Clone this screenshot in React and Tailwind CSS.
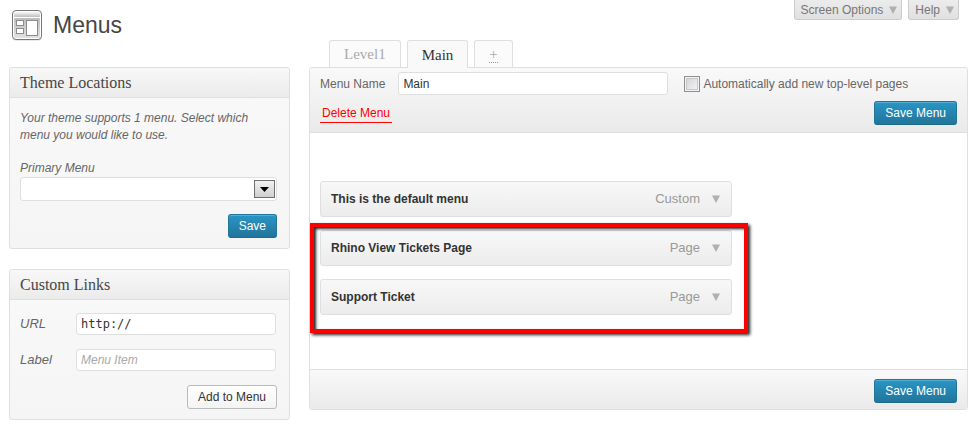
import React, { useState } from 'react';
import clsx from 'clsx';

const menuItems = [
  { id: 2, title: 'Rhino View Tickets Page', type: 'Page' },
  { id: 3, title: 'Support Ticket', type: 'Page' }
];

function MenusIcon() {
  return (
    <svg width="32" height="32" viewBox="0 0 32 32" aria-hidden="true">
      <defs>
        <linearGradient id="barFill" x1="0" y1="0" x2="0" y2="1">
          <stop offset="0" stopColor="#fafafa" />
          <stop offset="1" stopColor="#bdbdbd" />
        </linearGradient>
        <linearGradient id="bodyFill" x1="0" y1="0" x2="0" y2="1">
          <stop offset="0" stopColor="#bcbcbc" />
          <stop offset="1" stopColor="#e2e2e2" />
        </linearGradient>
      </defs>
      <rect x="1.5" y="2.5" width="29" height="29" rx="3.5" fill="#d5d5d5" />
      <rect x="1.5" y="1.5" width="29" height="29" rx="3.5" fill="#fff" stroke="#777" />
      <rect x="3" y="3" width="26" height="5" rx="1" fill="url(#barFill)" />
      <rect x="3" y="9" width="26" height="20" rx="1" fill="url(#bodyFill)" />
      <rect x="5.5" y="11.5" width="7" height="5" fill="#fff" stroke="#8c8c8c" />
      <rect x="5.5" y="19.5" width="7" height="5" fill="#fff" stroke="#8c8c8c" />
      <rect x="15.5" y="11.5" width="11" height="15" fill="#fff" stroke="#8c8c8c" />
    </svg>
  );
}

function DownArrow({ className }) {
  return (
    <svg width="8" height="8" viewBox="0 0 8 8" className={className} aria-hidden="true">
      <path d="M0 0.5h8L4 8z" fill="currentColor" />
    </svg>
  );
}

function PrimaryButton({ children }) {
  return (
    <button
      type="button"
      className="h-6 px-2.5 rounded-[3px] border border-[#21759b] border-b-[#1e6a8d] bg-linear-to-b from-[#2a95c5] to-[#21759b] text-white shadow-[inset_0_1px_0_rgba(120,200,230,0.5)] flex items-center"
    >
      {children}
    </button>
  );
}

// Tab hanging from the top edge of the screen
function ScreenTab({ children }) {
  return (
    <button
      type="button"
      className="h-5 pl-1.5 pr-1 flex items-center gap-1.5 rounded-b-[3px] border border-t-0 border-[#ccc] bg-linear-to-b from-[#ececec] to-[#e0e0e0] text-[#777]"
    >
      {children}
      <DownArrow className="text-[#b0b0b0]" />
    </button>
  );
}

function Postbox({ title, children }) {
  return (
    <section className="rounded-[3px] border border-[#dfdfdf] bg-linear-to-b from-[#f9f9f9] to-[#f5f5f5]">
      <h2 className="h-[30px] px-2.5 flex items-center rounded-t-[3px] border-b border-[#dfdfdf] bg-linear-to-b from-[#f8f8f8] to-[#ebebeb] font-['Liberation_Serif',serif] text-[16px] text-[#464646]">
        {title}
      </h2>
      {children}
    </section>
  );
}

function NavTab({ active, children }) {
  return (
    <button
      type="button"
      role="tab"
      aria-selected={active}
      className={clsx(
        "px-3.5 rounded-t-[3px] border border-b-0 border-[#dfdfdf] font-['Liberation_Serif',serif] text-[15px] flex items-center",
        active ? 'h-7 -mb-px bg-[#f9f9f9] text-[#333]' : 'h-[27px] bg-[#fbfbfb] text-[#aaa]'
      )}
    >
      {children}
    </button>
  );
}

function MenuItem({ title, type }) {
  return (
    <li className="h-9 pl-2.5 pr-[11px] flex items-center justify-between rounded-[3px] border border-[#dfdfdf] bg-linear-to-b from-[#f8f8f8] to-[#ececec]">
      <span className="font-bold text-[#333]">{title}</span>
      <span className="flex items-center gap-3 text-[13px] text-[#999]">
        {type}
        <button type="button" aria-label={`Edit ${title}`}>
          <DownArrow className="text-[#b0b0b0]" />
        </button>
      </span>
    </li>
  );
}

export default function App() {
  const [menuName, setMenuName] = useState('Main');
  const [url, setUrl] = useState('http://');
  const [label, setLabel] = useState('');
  const [autoAdd, setAutoAdd] = useState(false);

  return (
    <div className="pl-[9px] pr-3 pb-2.5 bg-white font-['Liberation_Sans',Arial,sans-serif] text-[12px] leading-4 text-[#333]">
      {/* Page header */}
      <header className="h-10 flex justify-between items-start">
        <div className="pt-[9px] pl-0.5 flex items-center gap-2.5">
          <MenusIcon />
          <h1 className="text-[23px] leading-8 text-[#464646]">Menus</h1>
        </div>
        <div className="flex gap-1.5 pr-[9px]">
          <ScreenTab>Screen Options</ScreenTab>
          <ScreenTab>Help</ScreenTab>
        </div>
      </header>

      <div className="flex gap-[19px]">
        {/* Left column */}
        <aside className="w-[281px] shrink-0 pt-[27px] flex flex-col gap-5">
          <Postbox title="Theme Locations">
            <div className="pt-3 pl-2.5 pr-3 pb-2.5 text-[#666]">
              <p className="italic leading-[17px]">
                Your theme supports 1 menu. Select which menu you would like to use.
              </p>
              <label htmlFor="primary-menu" className="block mt-4 italic leading-[17px]">
                Primary Menu
              </label>
              <div className="relative">
                <select
                  id="primary-menu"
                  className="block w-full h-6 px-2 appearance-none rounded-[3px] border border-[#dfdfdf] bg-white"
                >
                  <option></option>
                </select>
                <span className="absolute right-0.5 top-[3px] w-[21px] h-[18px] flex items-center justify-center border border-[#707070] bg-linear-to-b from-[#f2f2f2] to-[#cfcfcf] pointer-events-none">
                  <svg width="9" height="5" viewBox="0 0 9 5" aria-hidden="true">
                    <path d="M0 0h9L4.5 5z" fill="#000" />
                  </svg>
                </span>
              </div>
              <div className="mt-[13px] flex justify-end">
                <PrimaryButton>Save</PrimaryButton>
              </div>
            </div>
          </Postbox>

          <Postbox title="Custom Links">
            <div className="pt-[13px] pl-2.5 pr-3 pb-2.5">
              <div className="flex items-center">
                <label htmlFor="link-url" className="w-14 shrink-0 italic text-[13px] text-[#666]">URL</label>
                <input
                  id="link-url"
                  type="text"
                  value={url}
                  onChange={(e) => setUrl(e.target.value)}
                  className="w-[200px] h-[22px] px-1 rounded-[3px] border border-[#dfdfdf] bg-white font-['DejaVu_Sans_Mono',monospace]"
                />
              </div>
              <div className="mt-3.5 flex items-center">
                <label htmlFor="link-label" className="w-14 shrink-0 italic text-[13px] text-[#666]">Label</label>
                <input
                  id="link-label"
                  type="text"
                  placeholder="Menu Item"
                  value={label}
                  onChange={(e) => setLabel(e.target.value)}
                  className="w-[200px] h-[22px] px-1 rounded-[3px] border border-[#dfdfdf] bg-white placeholder:italic placeholder:text-[#aaa]"
                />
              </div>
              <div className="mt-3.5 flex justify-end">
                <button
                  type="button"
                  className="h-6 px-2.5 rounded-[3px] border border-[#bbb] bg-linear-to-b from-white to-[#f4f4f4]"
                >
                  Add to Menu
                </button>
              </div>
            </div>
          </Postbox>
        </aside>

        {/* Menu editor */}
        <main className="flex-1 min-w-0">
          <div role="tablist" className="pl-5 flex items-end gap-1.5 relative">
            <NavTab>Level1</NavTab>
            <NavTab active>Main</NavTab>
            <NavTab>
              <span className="border-b border-dotted border-[#999] leading-4">+</span>
            </NavTab>
          </div>

          <div className="rounded-[3px] border border-[#dfdfdf] bg-white">
            <div className="pt-1 px-2.5 pb-[7px] rounded-t-[3px] border-b border-[#dfdfdf] bg-linear-to-b from-[#f9f9f9] to-[#eaeaea]">
              <div className="flex items-center text-[#666]">
                <label htmlFor="menu-name" className="mr-[13px]">Menu Name</label>
                <input
                  id="menu-name"
                  type="text"
                  value={menuName}
                  onChange={(e) => setMenuName(e.target.value)}
                  className="w-[270px] h-[23px] px-1 rounded-[3px] border border-[#dfdfdf] bg-white text-[#333]"
                />
                <input
                  id="auto-add"
                  type="checkbox"
                  checked={autoAdd}
                  onChange={(e) => setAutoAdd(e.target.checked)}
                  className="ml-4 mr-[3px] size-4 appearance-none border border-[#8e8f8f] bg-linear-to-br from-[#cdd0d4] to-[#f8f8f8] shadow-[inset_0_0_0_1px_#f4f4f4,inset_0_0_0_2px_#c4c7cb] checked:to-[#2a95c5]"
                />
                <label htmlFor="auto-add">Automatically add new top-level pages</label>
              </div>
              <div className="mt-1.5 flex items-center justify-between">
                <a href="#delete" className="px-0.5 pt-px border-b border-[#f00] leading-[17px] text-[#f00]">Delete Menu</a>
                <PrimaryButton>Save Menu</PrimaryButton>
              </div>
            </div>

            <div className="pt-12 px-2.5 pb-[54px]">
              <div className="max-w-[412px]">
                <ul>
                  <MenuItem title="This is the default menu" type="Custom" />
                </ul>
                <div className="relative mt-[13px]">
                  <ul className="flex flex-col gap-[13px]">
                    {menuItems.map(item => (
                      <MenuItem key={item.id} title={item.title} type={item.type} />
                    ))}
                  </ul>
                  {/* Highlight frame around the page items */}
                  <div className="absolute -left-2.5 -right-4 -top-[7px] -bottom-[18px] border-4 border-[#f00] shadow-[2px_2px_3px_#222,inset_2px_2px_3px_#222] pointer-events-none"></div>
                </div>
              </div>
            </div>

            <div className="pt-[9px] pb-1.5 px-2.5 flex justify-end rounded-b-[3px] border-t border-[#dfdfdf] bg-linear-to-b from-[#f9f9f9] to-[#eaeaea]">
              <PrimaryButton>Save Menu</PrimaryButton>
            </div>
          </div>
        </main>
      </div>
    </div>
  );
}
